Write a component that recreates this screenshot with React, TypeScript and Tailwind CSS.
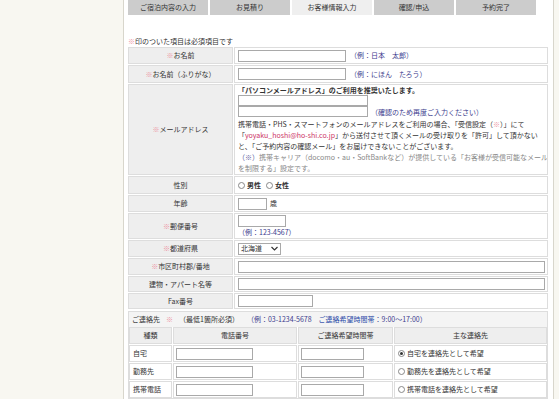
import React from 'react';

const tabs = ['ご宿泊内容の入力', 'お見積り', 'お客様情報入力', '確認/申込', '予約完了'];

function Req() {
  return <span className="text-[#ec8fa0]">※</span>;
}

function TextBox({ className = '' }: { className?: string }) {
  return <div className={`h-[12px] shrink-0 border border-[#a9a9a9] bg-white ${className}`} />;
}

function Radio({ checked = false }: { checked?: boolean }) {
  return (
    <span className="inline-flex h-[7px] w-[7px] items-center justify-center rounded-full border border-[#888] bg-white align-middle">
      {checked && <span className="h-[3px] w-[3px] rounded-full bg-[#333]" />}
    </span>
  );
}

function Row({
  label,
  req = false,
  h,
  top = false,
  children,
}: {
  label: string;
  req?: boolean;
  h: string;
  top?: boolean;
  children?: React.ReactNode;
}) {
  return (
    <div className={`flex gap-[1px] ${h}`}>
      <div className="flex w-[105px] shrink-0 items-center justify-center border border-[#dddddd] bg-[#eeeeee]">
        {req && <Req />}
        {label}
      </div>
      <div
        className={`flex flex-1 flex-col overflow-hidden border border-[#dddddd] bg-white px-[3px] ${
          top ? 'justify-start' : 'justify-center'
        }`}
      >
        {children}
      </div>
    </div>
  );
}

const contacts = [
  { kind: '自宅', main: '自宅を連絡先として希望', checked: true },
  { kind: '勤務先', main: '勤務先を連絡先として希望', checked: false },
  { kind: '携帯電話', main: '携帯電話を連絡先として希望', checked: false },
];

export default function App() {
  return (
    <div className="flex h-[399px] w-[559px] overflow-hidden bg-[#f8f7f1] font-['Noto_Sans_CJK_JP','Noto_Sans',sans-serif] text-[7px] leading-[11px] text-[#333333]">
      <div className="w-[124px] shrink-0 border-r border-[#d8d6cc]" />
      <div className="w-[429px] shrink-0 bg-white px-[4px]">
        {/* tabs */}
        <div className="flex gap-[2px]">
          {tabs.map((t, i) => (
            <div
              key={t}
              className={`flex h-[15px] w-[80px] items-center justify-center ${
                i === 2 ? 'bg-[#efefef]' : 'bg-[#cccccc]'
              }`}
            >
              {t}
            </div>
          ))}
        </div>

        <div className="mt-[21px] h-[11px]">
          <Req />
          印のついた項目は必須項目です
        </div>

        <div className="flex w-[420px] flex-col gap-[1px]">
          <Row label="お名前" req h="h-[17px]">
            <div className="flex items-center">
              <TextBox className="w-[108px]" />
              <span className="ml-[4px] text-[#3c3c8e]">（例：日本　太郎）</span>
            </div>
          </Row>
          <Row label="お名前（ふりがな）" req h="h-[18px]">
            <div className="flex items-center">
              <TextBox className="w-[108px]" />
              <span className="ml-[4px] text-[#3c3c8e]">（例：にほん　たろう）</span>
            </div>
          </Row>
          <Row label="メールアドレス" req h="h-[91px]" top>
            <div className="h-[10px] font-bold leading-[10px]">「パソコンメールアドレス」のご利用を推奨いたします。</div>
            <TextBox className="!h-[11px] w-[130px]" />
            <div className="flex items-end">
              <TextBox className="!h-[11px] w-[130px]" />
              <span className="ml-[3px] leading-[10px] text-[#3c3c8e]">（確認のため再度ご入力ください）</span>
            </div>
            <p className="mt-[2px] whitespace-nowrap leading-[11px]">
              携帯電話・PHS・スマートフォンのメールアドレスをご利用の場合、「受信設定（<span className="text-[#ec8fa0]">※</span>）」にて
              <br />
              「<span className="text-[#cc3366]">yoyaku_hoshi@ho-shi.co.jp</span>」から送付させて頂くメールの受け取りを「許可」して頂かない
              <br />
              と、「ご予約内容の確認メール」をお届けできないことがございます。
              <br />
              <span className="text-[#5a5aa0]">（※）</span>
              <span className="text-[#888888]">
                携帯キャリア（docomo・au・SoftBankなど）が提供している「お客様が受信可能なメール
                <br />
                を制限する」設定です。
              </span>
            </p>
          </Row>
          <Row label="性別" h="h-[18px]">
            <div className="flex items-center gap-[2px] font-bold">
              <Radio />
              <span>男性</span>
              <span className="w-[1px]" />
              <Radio />
              <span>女性</span>
            </div>
          </Row>
          <Row label="年齢" h="h-[17px]">
            <div className="flex items-center">
              <TextBox className="w-[29px]" />
              <span className="ml-[3px]">歳</span>
            </div>
          </Row>
          <Row label="郵便番号" req h="h-[26px]">
            <TextBox className="w-[48px]" />
            <div className="text-[#3c3c8e]">（例：123-4567）</div>
          </Row>
          <Row label="都道府県" req h="h-[17px]">
            <div className="flex h-[12px] w-[43px] items-center justify-between border border-[#a9a9a9] px-[2px]">
              <span>北海道</span>
              <svg width="7" height="5" viewBox="0 0 7 5">
                <path d="M0.5 1 L3.5 4 L6.5 1" fill="none" stroke="#333" strokeWidth="1.2" />
              </svg>
            </div>
          </Row>
          <Row label="市区町村郡/番地" req h="h-[17px]">
            <TextBox className="w-[307px] border-[#8aa]" />
          </Row>
          <Row label="建物・アパート名等" h="h-[16px]">
            <TextBox className="w-[307px]" />
          </Row>
          <Row label="Fax番号" h="h-[16px]">
            <TextBox className="w-[75px]" />
          </Row>
        </div>

        {/* contact */}
        <div className="mt-[2px] w-[420px] border border-[#dddddd] bg-[#f4f4f4]">
          <div className="flex h-[15px] items-center gap-[6px] px-[3px]">
            <span>ご連絡先</span>
            <Req />
            <span>（最低1箇所必須）</span>
            <span className="ml-[2px] text-[#3c3c8e]">
              （例：03-1234-5678　<span className="text-[#2a4aa8]">ご連絡希望時間帯</span>：9:00～17:00）
            </span>
          </div>
          <div className="flex flex-col gap-[1px] bg-white">
            <div className="flex h-[17px] gap-[1px]">
              <div className="flex w-[43px] items-center justify-center border border-[#dddddd] bg-[#eeeeee]">種類</div>
              <div className="flex w-[124px] items-center justify-center border border-[#dddddd] bg-[#eeeeee]">電話番号</div>
              <div className="flex w-[95px] items-center justify-center border border-[#dddddd] bg-[#eeeeee]">ご連絡希望時間帯</div>
              <div className="flex flex-1 items-center justify-center border border-[#dddddd] bg-[#eeeeee]">主な連絡先</div>
            </div>
            {contacts.map((c) => (
              <div key={c.kind} className="flex h-[17px] gap-[1px]">
                <div className="flex w-[43px] items-center border border-[#dddddd] px-[3px]">{c.kind}</div>
                <div className="flex w-[124px] items-center border border-[#dddddd] px-[2px]">
                  <TextBox className="w-[77px]" />
                </div>
                <div className="flex w-[95px] items-center border border-[#dddddd] px-[2px]">
                  <TextBox className="w-[63px]" />
                </div>
                <div className="flex flex-1 items-center gap-[2px] border border-[#dddddd] px-[3px]">
                  <Radio checked={c.checked} />
                  <span>{c.main}</span>
                </div>
              </div>
            ))}
          </div>
        </div>
      </div>
      <div className="flex-1 border-l border-[#d8d6cc]" />
    </div>
  );
}
